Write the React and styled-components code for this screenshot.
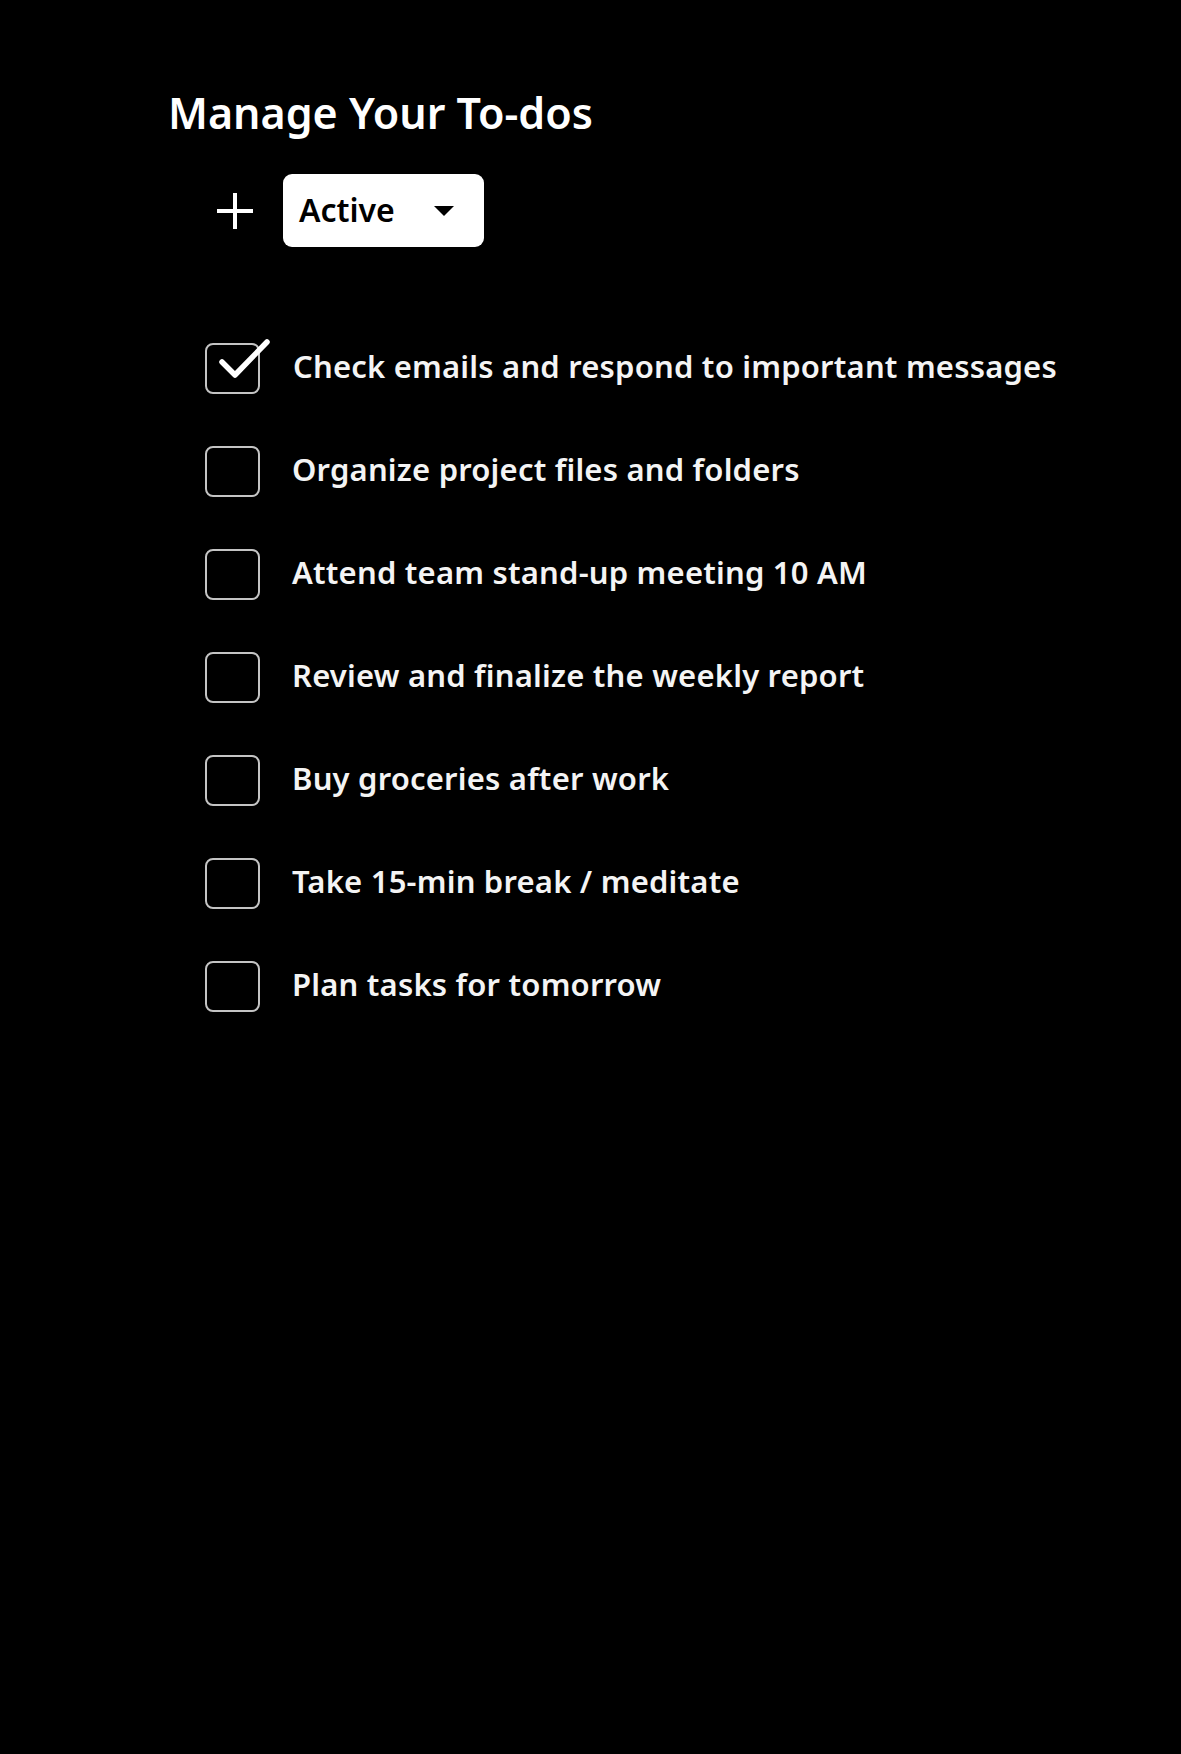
import React from "react";
import styled, { createGlobalStyle } from "styled-components";

const Global = createGlobalStyle`
  html, body { margin: 0; padding: 0; background: #000; }
  body { font-family: "Noto Sans", "Open Sans", sans-serif; color: #fff; }
  #root { min-height: 1754px; background: #000; }
`;

const Page = styled.div`
  padding: 88px 0 0 168px;
`;

const Title = styled.h1`
  margin: 0;
  font-size: 43px;
  font-weight: 600;
  line-height: 50px;
  letter-spacing: 0;
  color: #fff;
`;

const Toolbar = styled.div`
  display: flex;
  align-items: center;
  gap: 30px;
  margin: 36px 0 0 49px;
`;

const AddButton = styled.button`
  width: 36px;
  height: 36px;
  padding: 0;
  border: none;
  background: transparent;
  position: relative;
  cursor: pointer;
  &::before, &::after {
    content: "";
    position: absolute;
    background: #fff;
  }
  &::before { left: 0; right: 0; top: 16px; height: 4px; }
  &::after { top: 0; bottom: 0; left: 16px; width: 4px; }
`;

const Select = styled.div`
  width: 201px;
  height: 73px;
  box-sizing: border-box;
  background: #fff;
  border-radius: 9px;
  display: flex;
  align-items: center;
  padding: 0 30px 2px 16px;
  justify-content: space-between;
  color: #000;
  font-size: 32px;
  font-weight: 600;
`;

const Caret = styled.span`
  width: 0;
  height: 0;
  margin-top: 2px;
  border-left: 10px solid transparent;
  border-right: 10px solid transparent;
  border-top: 10px solid #000;
`;

const List = styled.ul`
  list-style: none;
  margin: 96px 0 0 37px;
  padding: 0;
  display: flex;
  flex-direction: column;
  gap: 52px;
`;

const Row = styled.li`
  display: flex;
  align-items: center;
  gap: 32px;
  height: 51px;
`;

const Box = styled.span`
  position: relative;
  flex: none;
  width: 55px;
  height: 51px;
  box-sizing: border-box;
  border: 2.5px solid #c4c4c4;
  border-radius: 8px;
`;

const Check = styled.svg`
  position: absolute;
  left: 12px;
  top: -6px;
`;

const Label = styled.span`
  font-size: 31px;
  font-weight: 600;
  letter-spacing: 0.2px;
  line-height: 40px;
  margin-top: -5px;
  color: #f4f4f4;
  margin-left: ${(p) => (p.$checked ? "1px" : "0")};
`;

const todos = [
  { text: "Check emails and respond to important messages", done: true },
  { text: "Organize project files and folders" },
  { text: "Attend team stand-up meeting 10 AM" },
  { text: "Review and finalize the weekly report" },
  { text: "Buy groceries after work" },
  { text: "Take 15-min break / meditate" },
  { text: "Plan tasks for tomorrow" },
];

export default function App() {
  return (
    <>
      <Global />
      <Page>
        <Title>Manage Your To-dos</Title>
        <Toolbar>
          <AddButton aria-label="Add" />
          <Select>
            <span>Active</span>
            <Caret />
          </Select>
        </Toolbar>
        <List>
          {todos.map((t) => (
            <Row key={t.text}>
              <Box>
                {t.done && (
                  <Check width="52" height="42" viewBox="0 0 52 42">
                    <polyline
                      points="3,23 16,36 48,3"
                      fill="none"
                      stroke="#fff"
                      strokeWidth="5.5"
                      strokeLinecap="round"
                      strokeLinejoin="round"
                    />
                  </Check>
                )}
              </Box>
              <Label $checked={t.done}>{t.text}</Label>
            </Row>
          ))}
        </List>
      </Page>
    </>
  );
}
